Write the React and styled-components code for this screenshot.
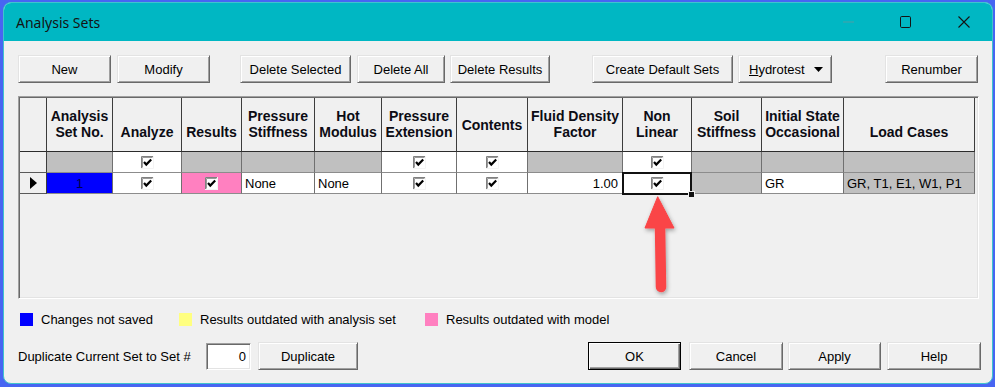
import React from 'react';
import styled, { createGlobalStyle, css } from 'styled-components';

const GlobalStyle = createGlobalStyle`
  html, body { margin: 0; padding: 0; background: #4765f2; }
  body {
    width: 995px; height: 387px; overflow: hidden;
    font-family: "Liberation Sans", Arial, sans-serif;
  }
  * { box-sizing: border-box; }
`;

const Screen = styled.div`
  width: 995px;
  height: 387px;
  padding: 2px 3px 0 3px;
`;

const Window = styled.div`
  position: relative;
  width: 990px;
  height: 382px;
  border: 1px solid #3fc3cc;
  border-radius: 8px;
  overflow: hidden;
  background: #f0f0f0;
  display: flex;
  flex-direction: column;
`;

const TitleBar = styled.div`
  height: 38px;
  flex: none;
  background: #00b7c3;
  display: flex;
  align-items: center;
`;

const TitleText = styled.div`
  flex: 1;
  padding-left: 12px;
  font-family: "Noto Sans", "Open Sans", sans-serif;
  font-size: 14px;
  color: #141414;
`;

const Caption = styled.div`
  width: ${p => p.$w}px;
  height: 38px;
  display: flex;
  align-items: center;
  justify-content: center;
`;

const Body = styled.div`
  flex: 1;
  padding: 0 14px 0 14px;
  display: flex;
  flex-direction: column;
`;

const Toolbar = styled.div`
  margin-top: 14px;
  display: flex;
  align-items: center;
  height: 28px;
`;

const Button = styled.button`
  width: ${p => p.$w}px;
  height: 28px;
  margin-left: ${p => (p.$auto ? 'auto' : `${p.$ml || 0}px`)};
  padding: 0;
  font-family: "Liberation Sans", Arial, sans-serif;
  font-size: 13px;
  color: #000;
  background: #f0f0f0;
  border: 1px solid;
  border-color: #e3e3e3 #696969 #696969 #e3e3e3;
  box-shadow: inset 1px 1px 0 #fff, inset -1px -1px 0 #a0a0a0;
  display: flex;
  align-items: center;
  justify-content: center;
  ${p => p.$default && css`
    border-color: #000;
    box-shadow: inset 1px 1px 0 #fff, inset -1px -1px 0 #696969, inset -2px -2px 0 #a0a0a0;
  `}
`;

const DropButton = styled(Button)`
  justify-content: space-between;
  padding: 0 8px 0 10px;
`;

const Underline = styled.span`
  text-decoration: underline;
`;

const GridFrame = styled.div`
  margin-top: 13px;
  width: 961px;
  height: 203px;
  border: 1px solid;
  border-color: #a0a0a0 #fff #fff #a0a0a0;
  box-shadow: inset 1px 1px 0 #696969, inset -1px -1px 0 #e3e3e3;
  padding: 1px;
  background: #f0f0f0;
`;

const Grid = styled.div`
  display: grid;
  grid-template-columns: ${p => p.$cols};
  grid-template-rows: 54px 21px 21px;
`;

const HeadCell = styled.div`
  background: #f0f0f0;
  border-right: 1px solid #3c3c3c;
  border-bottom: 1px solid #2c2c2c;
  display: flex;
  flex-direction: column;
  align-items: center;
  justify-content: ${p => (p.$center ? 'center' : 'flex-end')};
  padding-bottom: ${p => (p.$center ? 0 : 11)}px;
  font-size: 14px;
  font-weight: bold;
  line-height: 16px;
  color: #0c0c14;
  text-align: center;
  white-space: nowrap;
`;

const RowHead = styled.div`
  background: #f0f0f0;
  border-right: 1px solid #3c3c3c;
  border-bottom: 1px solid #5a5a5a;
  display: flex;
  align-items: center;
  justify-content: center;
`;

const Cell = styled.div`
  position: relative;
  background: ${p => p.$bg || '#fff'};
  border-right: 1px solid #707070;
  border-bottom: 1px solid #8c8c8c;
  display: flex;
  align-items: center;
  justify-content: ${p => p.$align || 'center'};
  padding: 0 4px 0 ${p => (p.$align === 'flex-start' ? 3 : 4)}px;
  font-size: 13px;
  color: ${p => p.$color || '#000'};
  white-space: nowrap;
  ${p => p.$focus && css`
    &::after {
      content: '';
      position: absolute;
      left: -1px; top: -1px; right: -1px; bottom: -2px;
      border: 2px solid #111;
    }
    &::before {
      content: '';
      position: absolute;
      right: -4px; bottom: -5px;
      width: 5px; height: 5px;
      background: #111;
      border: 1px solid #f0f0f0;
      z-index: 2;
    }
  `}
`;

const Legend = styled.div`
  margin-top: 14px;
  margin-left: 2px;
  height: 13px;
  display: flex;
  align-items: center;
`;

const LegendItem = styled.div`
  width: ${p => (p.$w ? `${p.$w}px` : 'auto')};
  display: flex;
  align-items: center;
  font-size: 13px;
  color: #000;
  white-space: nowrap;
`;

const Swatch = styled.span`
  width: 13px;
  height: 13px;
  margin-right: 8px;
  background: ${p => p.$c};
`;

const BottomRow = styled.div`
  margin-top: 16px;
  margin-right: -3px;
  height: 28px;
  display: flex;
  align-items: center;
`;

const Label = styled.span`
  font-size: 13px;
  color: #000;
  width: 188px;
`;

const NumberBox = styled.div`
  width: 45px;
  height: 27px;
  background: #fff;
  border: 1px solid;
  border-color: #a0a0a0 #fff #fff #a0a0a0;
  box-shadow: inset 1px 1px 0 #696969, inset -1px -1px 0 #e3e3e3;
  display: flex;
  align-items: center;
  justify-content: flex-end;
  padding-right: 4px;
  font-size: 13px;
  color: #000;
`;

const ArrowLayer = styled.svg`
  position: absolute;
  left: 632px;
  top: 190px;
  overflow: visible;
`;

const Check = () => (
  <svg width="13" height="13" viewBox="0 0 13 13">
    <rect x="0" y="0" width="13" height="13" fill="#fff" />
    <path d="M0.5 12.5 V0.5 H12.5" stroke="#808080" fill="none" />
    <path d="M1.5 11.5 V1.5 H11.5" stroke="#9a9a9a" fill="none" />
    <path d="M12.5 0 V12.5 H0" stroke="#f4f4f4" fill="none" />
    <path d="M3 6 L5.3 8.6 L10.2 3.6" stroke="#000" strokeWidth="2.2" fill="none" />
  </svg>
);

const RowArrow = () => (
  <svg width="7" height="12" viewBox="0 0 7 12">
    <path d="M0 0 L7 6 L0 12 Z" fill="#000" />
  </svg>
);

const columns = [
  { w: 27, label: [] },
  { w: 66, label: ['Analysis', 'Set No.'] },
  { w: 69, label: ['Analyze'] },
  { w: 60, label: ['Results'] },
  { w: 73, label: ['Pressure', 'Stiffness'] },
  { w: 67, label: ['Hot', 'Modulus'] },
  { w: 75, label: ['Pressure', 'Extension'] },
  { w: 71, label: ['Contents'], center: true },
  { w: 95, label: ['Fluid Density', 'Factor'] },
  { w: 69, label: ['Non', 'Linear'] },
  { w: 70, label: ['Soil', 'Stiffness'] },
  { w: 82, label: ['Initial State', 'Occasional'] },
  { w: 131, label: ['Load Cases'] },
];

const GRAY = '#c0c0c0';

const rows = [
  {
    head: null,
    cells: [
      { bg: GRAY }, { check: true }, { bg: GRAY }, { bg: GRAY }, { bg: GRAY },
      { check: true }, { check: true }, { bg: GRAY }, { check: true },
      { bg: GRAY }, { bg: GRAY }, { bg: GRAY },
    ],
  },
  {
    head: <RowArrow />,
    cells: [
      { bg: '#0000ff', text: '1', color: '#00004a' },
      { check: true },
      { bg: '#ff80c0', check: true },
      { text: 'None', align: 'flex-start' },
      { text: 'None', align: 'flex-start' },
      { check: true },
      { check: true },
      { text: '1.00', align: 'flex-end' },
      { check: true, focus: true },
      { bg: GRAY },
      { text: 'GR', align: 'flex-start' },
      { bg: GRAY, text: 'GR, T1, E1, W1, P1', align: 'flex-start' },
    ],
  },
];

export default function App() {
  const cols = columns.map(c => `${c.w}px`).join(' ');
  return (
    <>
      <GlobalStyle />
      <Screen>
        <Window>
          <TitleBar>
            <TitleText>Analysis Sets</TitleText>
            <Caption $w={52}>
              <svg width="11" height="2" viewBox="0 0 11 2">
                <path d="M0 1 H11" stroke="#4f9ea5" strokeWidth="1" />
              </svg>
            </Caption>
            <Caption $w={62}>
              <svg width="11" height="12" viewBox="0 0 11 12">
                <rect x="0.5" y="0.5" width="10" height="11" rx="1.2" fill="none" stroke="#141414" />
              </svg>
            </Caption>
            <Caption $w={56}>
              <svg width="12" height="12" viewBox="0 0 12 12">
                <path d="M0.5 0.5 L11.5 11.5 M11.5 0.5 L0.5 11.5" stroke="#141414" strokeWidth="1.1" />
              </svg>
            </Caption>
          </TitleBar>

          <Body>
            <Toolbar>
              <Button $w={93}>New</Button>
              <Button $w={93} $ml={6}>Modify</Button>
              <Button $w={111} $ml={30}>Delete Selected</Button>
              <Button $w={88} $ml={6}>Delete All</Button>
              <Button $w={100} $ml={5}>Delete Results</Button>
              <Button $w={141} $ml={42}>Create Default Sets</Button>
              <DropButton $w={94} $ml={5}>
                <span><Underline>H</Underline>ydrotest</span>
                <svg width="9" height="5" viewBox="0 0 9 5">
                  <path d="M0 0 H9 L4.5 5 Z" fill="#000" />
                </svg>
              </DropButton>
              <Button $w={93} $auto>Renumber</Button>
            </Toolbar>

            <GridFrame>
              <Grid $cols={cols}>
                {columns.map((c, i) => (
                  <HeadCell key={`h${i}`} $center={c.center}>
                    {c.label.map(l => <span key={l}>{l}</span>)}
                  </HeadCell>
                ))}
                {rows.map((r, ri) => (
                  <React.Fragment key={`r${ri}`}>
                    <RowHead>{r.head}</RowHead>
                    {r.cells.map((c, ci) => (
                      <Cell
                        key={`c${ri}-${ci}`}
                        $bg={c.bg}
                        $align={c.align}
                        $color={c.color}
                        $focus={c.focus}
                      >
                        {c.check ? <Check /> : c.text}
                      </Cell>
                    ))}
                  </React.Fragment>
                ))}
              </Grid>
            </GridFrame>

            <Legend>
              <LegendItem $w={159}><Swatch $c="#0000ff" />Changes not saved</LegendItem>
              <LegendItem $w={246}><Swatch $c="#ffff80" />Results outdated with analysis set</LegendItem>
              <LegendItem><Swatch $c="#ff80c0" />Results outdated with model</LegendItem>
            </Legend>

            <BottomRow>
              <Label>Duplicate Current Set to Set #</Label>
              <NumberBox>0</NumberBox>
              <Button $w={100} $ml={7}>Duplicate</Button>
              <Button $w={93} $auto $default>OK</Button>
              <Button $w={94} $ml={8}>Cancel</Button>
              <Button $w={93} $ml={5}>Apply</Button>
              <Button $w={94} $ml={6}>Help</Button>
            </BottomRow>
          </Body>

          <ArrowLayer width="44" height="104" viewBox="0 0 44 104">
            <defs>
              <filter id="arrowShadow" x="-50%" y="-20%" width="200%" height="150%">
                <feDropShadow dx="1" dy="2" stdDeviation="2" floodColor="#000" floodOpacity="0.35" />
              </filter>
            </defs>
            <g filter="url(#arrowShadow)" fill="#fa4446" stroke="#fa4446">
              <line x1="24" y1="32" x2="25" y2="94" strokeWidth="10.5" strokeLinecap="round" />
              <path d="M21.7 3.7 L9 35 L38 35 Z" strokeWidth="1" strokeLinejoin="round" />
            </g>
          </ArrowLayer>
        </Window>
      </Screen>
    </>
  );
}
